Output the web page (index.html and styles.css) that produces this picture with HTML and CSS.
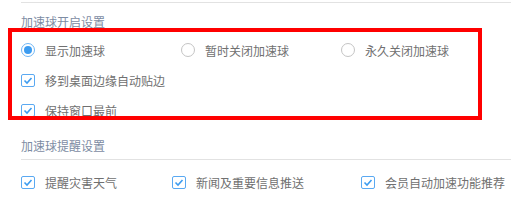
FILE: index.html
```html
<!DOCTYPE html>
<html>
<head>
<meta charset="utf-8">
<link rel="stylesheet" href="styles.css">
</head>
<body>
<div class="page">
  <div class="topline"></div>
  <div class="title first">加速球开启设置</div>
  <div class="row grid3">
    <label class="opt"><span class="radio on"></span><span class="txt">显示加速球</span></label>
    <label class="opt"><span class="radio"></span><span class="txt">暂时关闭加速球</span></label>
    <label class="opt"><span class="radio"></span><span class="txt">永久关闭加速球</span></label>
  </div>
  <div class="row">
    <label class="opt"><span class="check"><svg viewBox="0 0 14 13" width="14" height="13"><path d="M3.5 6.5 L6 9 L10.5 4" fill="none" stroke="#3d9cf0" stroke-width="1.6"/></svg></span><span class="txt">移到桌面边缘自动贴边</span></label>
  </div>
  <div class="row">
    <label class="opt"><span class="check"><svg viewBox="0 0 14 13" width="14" height="13"><path d="M3.5 6.5 L6 9 L10.5 4" fill="none" stroke="#3d9cf0" stroke-width="1.6"/></svg></span><span class="txt">保持窗口最前</span></label>
  </div>
  <div class="title second">加速球提醒设置</div>
  <div class="line"></div>
  <div class="row bottom">
    <label class="opt w1"><span class="check"><svg viewBox="0 0 14 13" width="14" height="13"><path d="M3.5 6.5 L6 9 L10.5 4" fill="none" stroke="#3d9cf0" stroke-width="1.6"/></svg></span><span class="txt">提醒灾害天气</span></label>
    <label class="opt w2"><span class="check"><svg viewBox="0 0 14 13" width="14" height="13"><path d="M3.5 6.5 L6 9 L10.5 4" fill="none" stroke="#3d9cf0" stroke-width="1.6"/></svg></span><span class="txt">新闻及重要信息推送</span></label>
    <label class="opt"><span class="check"><svg viewBox="0 0 14 13" width="14" height="13"><path d="M3.5 6.5 L6 9 L10.5 4" fill="none" stroke="#3d9cf0" stroke-width="1.6"/></svg></span><span class="txt">会员自动加速功能推荐</span></label>
  </div>
  <div class="annot"></div>
</div>
</body>
</html>
```
FILE: styles.css
```css
html, body {
  margin: 0;
  padding: 0;
  background: #fff;
}
.page {
  position: relative;
  width: 511px;
  height: 200px;
  overflow: hidden;
  padding-top: 2px;
  box-sizing: border-box;
  font-family: "Noto Sans CJK SC", "Noto Sans", sans-serif;
  font-size: 12px;
  color: #707070;
}
.topline {
  height: 1px;
  margin-left: 21px;
  background: #e2e2e2;
}
.title {
  color: #7d8ca3;
  font-size: 12px;
  line-height: 17px;
  height: 17px;
  margin-left: 21px;
}
.title.first {
  padding-top: 10px;
  padding-bottom: 5px;
}
.title.second {
  padding-top: 12px;
  padding-bottom: 5px;
}
.line {
  height: 1px;
  margin-left: 21px;
  background: #e2e2e2;
}
.row {
  height: 30px;
  display: flex;
  align-items: center;
  padding-left: 21px;
}
.row.grid3 {
  display: grid;
  grid-template-columns: 160px 160px 160px;
}
.row.bottom {
  margin-top: 7px;
}
.opt {
  display: flex;
  align-items: center;
  gap: 10px;
}
.opt.w1 { width: 151px; }
.opt.w2 { width: 189px; }
.txt {
  line-height: 17px;
}
.radio {
  width: 14px;
  height: 14px;
  box-sizing: border-box;
  border: 1px solid #c4c4c4;
  border-radius: 50%;
  display: flex;
  align-items: center;
  justify-content: center;
  background: #fff;
}
.radio.on {
  border-color: #6fb6f5;
}
.radio.on::after {
  content: "";
  width: 8px;
  height: 8px;
  border-radius: 50%;
  background: #3d9cf0;
}
.check {
  width: 14px;
  height: 13px;
  box-sizing: border-box;
  border: 1px solid #5aa9f2;
  border-radius: 2px;
  display: flex;
  align-items: center;
  justify-content: center;
  position: relative;
}
.check svg {
  position: absolute;
  left: -1px;
  top: -1px;
}
.annot {
  position: absolute;
  left: 8px;
  top: 28px;
  width: 474px;
  height: 92px;
  box-sizing: border-box;
  border: 4px solid #ff0000;
}
```
